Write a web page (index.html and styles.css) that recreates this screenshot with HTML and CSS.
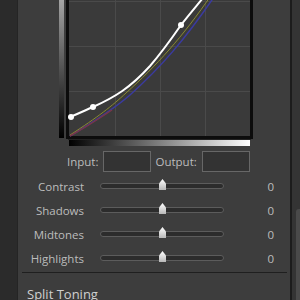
FILE: index.html
```html
<!DOCTYPE html>
<html>
<head>
<meta charset="utf-8">
<link rel="stylesheet" href="styles.css">
</head>
<body>
<div class="app">
  <div class="side-left"></div>
  <div class="panel">
    <svg class="curve" width="200" height="147" viewBox="56 0 200 147">
      <defs>
        <linearGradient id="vg" x1="0" y1="0" x2="0" y2="1">
          <stop offset="0" stop-color="#d8d8d8"/>
          <stop offset="1" stop-color="#000"/>
        </linearGradient>
        <linearGradient id="hg" x1="0" y1="0" x2="1" y2="0">
          <stop offset="0" stop-color="#000"/>
          <stop offset="1" stop-color="#fff"/>
        </linearGradient>
      </defs>
      <rect x="59" y="-44" width="5" height="182" fill="url(#vg)"/>
      <rect x="66" y="-48" width="187" height="187" fill="#0c0c0c"/>
      <rect x="69" y="-44" width="181" height="180" fill="#3a3a3a"/>
      <g stroke="#4a4a4a" stroke-width="1">
        <line x1="115.5" y1="-44" x2="115.5" y2="136"/>
        <line x1="160.5" y1="-44" x2="160.5" y2="136"/>
        <line x1="205.5" y1="-44" x2="205.5" y2="136"/>
        <line x1="69" y1="1.5" x2="250" y2="1.5"/>
        <line x1="69" y1="46.5" x2="250" y2="46.5"/>
        <line x1="69" y1="91.5" x2="250" y2="91.5"/>
      </g>
      <path d="M70,136 C100,118 115,108 130,95 C160,68 185,40 216,-6" fill="none" stroke="#3a3aa0" stroke-width="1.5"/>
      <path d="M70,135 C98,117 112,106 126,93 C156,66 182,38 212,-6" fill="none" stroke="#8a8a30" stroke-width="1"/>
      <path d="M70,136 C88,126 100,118 112,110" fill="none" stroke="#7a3548" stroke-width="1.5"/>
      <path d="M70,117 C80,113 86,110 93,107 C115,97 130,88 150,66 C162,52 172,38 181,25 C191,12 200,2 211,-12" fill="none" stroke="#fff" stroke-width="2"/>
      <circle cx="71" cy="117" r="3" fill="#fff"/>
      <circle cx="93" cy="107" r="3" fill="#fff"/>
      <circle cx="181" cy="25" r="3" fill="#fff"/>
      <rect x="68" y="139" width="183" height="1" fill="#222"/>
      <rect x="69" y="140" width="181" height="6" fill="url(#hg)"/>
    </svg>
    <div class="io-row">
      <span class="io-label">Input:</span>
      <span class="io-box"></span>
      <span class="io-label">Output:</span>
      <span class="io-box"></span>
    </div>
    <div class="sliders">
      <div class="slider-row"><span class="s-label">Contrast</span><span class="track"><span class="thumb"></span></span><span class="s-val">0</span></div>
      <div class="slider-row"><span class="s-label">Shadows</span><span class="track"><span class="thumb"></span></span><span class="s-val">0</span></div>
      <div class="slider-row"><span class="s-label">Midtones</span><span class="track"><span class="thumb"></span></span><span class="s-val">0</span></div>
      <div class="slider-row"><span class="s-label">Highlights</span><span class="track"><span class="thumb"></span></span><span class="s-val">0</span></div>
    </div>
    <div class="sep"></div>
    <div class="section-title">Split Toning</div>
  </div>
  <div class="side-right"><div class="scroll-thumb"></div></div>
</div>
</body>
</html>
```

FILE: styles.css
```css
html, body {
  margin: 0;
  padding: 0;
  background: #2a2a2a;
  font-family: "Open Sans", "Noto Sans", sans-serif;
  overflow: hidden;
}
.app {
  display: flex;
  width: 300px;
  height: 300px;
}
.side-left {
  width: 17px;
  background: #2b2b2b;
  border-right: 1px solid #252525;
}
.panel {
  width: 272px;
  background: #3d3d3d;
  display: flex;
  flex-direction: column;
  overflow: hidden;
}
.curve {
  display: block;
  margin-left: 38px;
  flex: none;
}
.io-row {
  display: flex;
  align-items: center;
  margin-top: 4px;
  padding-left: 49px;
  height: 21px;
  flex: none;
}
.io-label {
  color: #bcbcbc;
  font-size: 11.5px;
  margin-right: 5px;
}
.io-box {
  width: 46px;
  height: 19px;
  background: #333;
  border: 1px solid #676767;
  margin-right: 4px;
}
.sliders {
  margin-top: 2px;
  display: flex;
  flex-direction: column;
}
.slider-row {
  display: grid;
  grid-template-columns: 66px 124px 1fr;
  column-gap: 16px;
  align-items: center;
  height: 24px;
}
.s-label {
  color: #bcbcbc;
  font-size: 11.5px;
  text-align: right;
}
.track {
  position: relative;
  height: 4px;
  background: #2c2c2c;
  border: 1px solid #5c5c5c;
  border-radius: 3px;
}
.thumb {
  position: absolute;
  left: 58px;
  top: -5px;
  width: 7px;
  height: 11px;
  background: linear-gradient(#ffffff, #b8b8b8);
  clip-path: polygon(50% 0, 100% 40%, 100% 100%, 0 100%, 0 40%);
}
.s-val {
  color: #bcbcbc;
  font-size: 11.5px;
  text-align: right;
  padding-right: 16px;
}
.sep {
  height: 1px;
  background: #1f1f1f;
  margin: 2px 3px 0 4px;
  flex: none;
}
.section-title {
  color: #d0d0d0;
  font-size: 13px;
  padding-left: 9px;
  margin-top: 12px;
}
.side-right {
  width: 10px;
  background: #343434;
  border-left: 2px solid #1c1c1c;
  box-sizing: border-box;
  position: relative;
}
.scroll-thumb {
  position: absolute;
  left: 4px;
  right: 0;
  top: 209px;
  bottom: 0;
  background: #4a4a4a;
  border-radius: 3px 0 0 0;
}
```
